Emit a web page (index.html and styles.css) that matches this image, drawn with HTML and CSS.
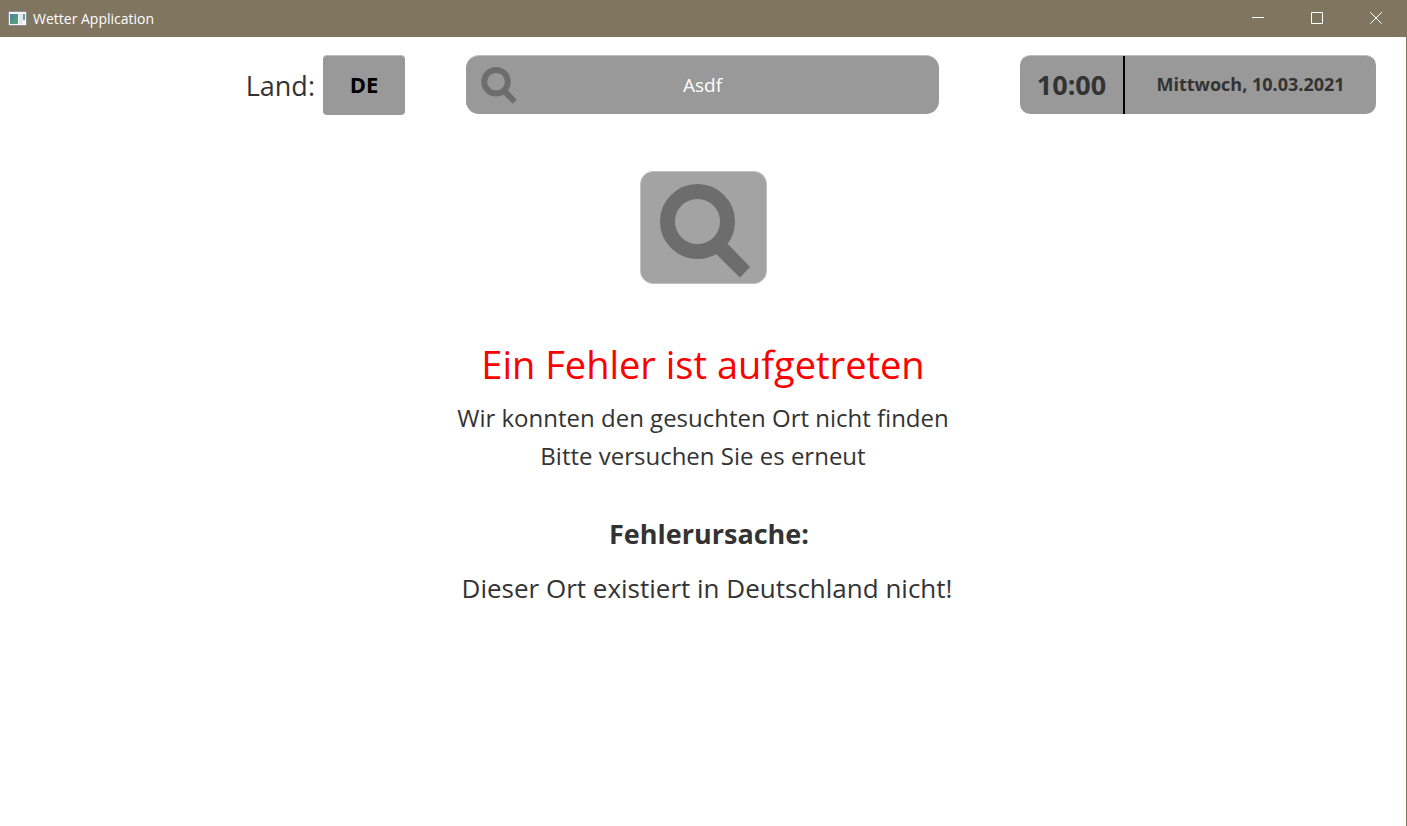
FILE: index.html
```html
<!DOCTYPE html>
<html lang="de">
<head>
<meta charset="utf-8">
<meta name="viewport" content="width=device-width, initial-scale=1">
<title>Wetter Application</title>
<link rel="stylesheet" href="styles.css">
</head>
<body>
<div class="window">
  <header class="titlebar">
    <svg class="app-icon" viewBox="0 0 19 16" aria-hidden="true">
      <defs>
        <linearGradient id="screen" x1="0" y1="0" x2="1" y2="1">
          <stop offset="0" stop-color="#4a7fa0"/>
          <stop offset="1" stop-color="#58a874"/>
        </linearGradient>
      </defs>
      <rect x="0" y="0" width="19" height="15" rx="1" fill="#8d8d8f"/>
      <rect x="1" y="1" width="17" height="13" fill="#f4f6f8"/>
      <rect x="2" y="3" width="8" height="10" fill="url(#screen)"/>
      <rect x="11" y="3" width="4" height="10" fill="#e4e8ec"/>
      <rect x="15" y="3" width="2" height="6" fill="#62a596"/>
    </svg>
    <span class="app-name">Wetter Application</span>
    <button class="window-button" type="button" aria-label="Minimieren">
      <svg viewBox="0 0 12 12" width="12" height="12"><path d="M0 5.5H12"/></svg>
    </button>
    <button class="window-button" type="button" aria-label="Maximieren">
      <svg viewBox="0 0 12 12" width="12" height="12"><path d="M.5 .5H11.5V11.5H.5Z"/></svg>
    </button>
    <button class="window-button" type="button" aria-label="Schließen">
      <svg viewBox="0 0 12 12" width="12" height="12"><path d="M.3 .3L11.7 11.7M11.7 .3L.3 11.7"/></svg>
    </button>
  </header>

  <main class="content">
    <div class="toolbar">
      <div class="country">
        <label class="country-label" for="country">Land:</label>
        <button class="country-button" id="country" type="button">DE</button>
      </div>
      <form class="search">
        <label class="search-label" for="place" aria-label="Ort suchen">
          <svg class="search-icon" viewBox="0 0 90 94" aria-hidden="true">
            <circle cx="37.5" cy="37.5" r="30"/>
            <path d="M64 56L90 83L80 93.5L53 67Z"/>
          </svg>
        </label>
        <input class="search-input" id="place" type="text" value="Asdf">
      </form>
      <div class="clock">
        <time class="clock-time">10:00</time>
        <time class="clock-date" datetime="2021-03-10">Mittwoch, 10.03.2021</time>
      </div>
    </div>

    <div class="badge">
      <svg class="badge-icon" viewBox="0 0 90 94" aria-hidden="true">
        <circle cx="37.5" cy="37.5" r="30"/>
        <path d="M64 56L90 83L80 93.5L53 67Z"/>
      </svg>
    </div>

    <section class="message">
      <h1 class="message-title">Ein Fehler ist aufgetreten</h1>
      <p class="message-text">Wir konnten den gesuchten Ort nicht finden</p>
      <p class="message-text">Bitte versuchen Sie es erneut</p>
    </section>

    <section class="cause">
      <h2 class="cause-title">Fehlerursache:</h2>
      <p class="cause-text">Dieser Ort existiert in Deutschland nicht!</p>
    </section>
  </main>
</div>
</body>
</html>
```

FILE: styles.css
```css
* {
  box-sizing: border-box;
}

body {
  margin: 0;
  background: #fff;
  color: #333;
  font-family: "Segoe UI", "Open Sans", "Noto Sans", sans-serif;
}

h1, h2, p {
  margin: 0;
  font-weight: 400;
}

button, input {
  border: 0;
  padding: 0;
  font-family: inherit;
}

.window {
  display: flex;
  flex-direction: column;
  min-height: 100vh;
}

.titlebar {
  display: flex;
  align-items: center;
  height: 37px;
  padding-left: 8px;
  padding-right: 2px;
  background: #80755f;
  color: #fff;
}

.app-icon {
  width: 19px;
  height: 16px;
}

.app-name {
  flex: 1;
  margin-left: 6px;
  font-size: 14px;
}

.window-button {
  display: grid;
  place-items: center;
  width: 59px;
  height: 37px;
  padding-bottom: 1px;
  background: none;
}

.window-button path {
  fill: none;
  stroke: #fff;
}

.content {
  display: flex;
  flex: 1;
  flex-direction: column;
  align-items: center;
  padding-top: 18px;
  border-right: 1px solid #80755f;
}

.toolbar {
  display: grid;
  grid-template-columns: 1fr minmax(0, 473px) 1fr;
  align-items: start;
  width: 100%;
  padding-right: 1px;
}

.country {
  display: flex;
  align-items: center;
  justify-self: end;
  gap: 8px;
  margin-right: 61px;
}

.country-label {
  font-size: 27px;
}

.country-button {
  width: 82px;
  height: 60px;
  padding-bottom: 3px;
  border-top: 1px solid #c0c0c0;
  border-radius: 4px;
  background: #999;
  color: #000;
  font-size: 22px;
  font-weight: 700;
}

.search {
  display: grid;
  grid-template-columns: 51px 1fr 51px;
  align-items: center;
  height: 59px;
  border-top: 1px solid #c0c0c0;
  border-radius: 13px;
  background: #999;
}

.search-label {
  display: flex;
  justify-content: end;
}

.search-icon {
  width: 36px;
  height: 37px;
}

.search-icon circle,
.badge-icon circle {
  fill: none;
  stroke: #6d6d6d;
  stroke-width: 15;
}

.search-icon path,
.badge-icon path {
  fill: #6d6d6d;
}

.search-input {
  width: 100%;
  background: none;
  color: #fff;
  font-size: 19px;
  text-align: center;
  outline: 0;
}

.clock {
  display: flex;
  justify-self: end;
  width: 356px;
  height: 59px;
  margin-right: 29px;
  border-top: 1px solid #c0c0c0;
  border-radius: 10px;
  background: #999;
  font-weight: 700;
}

.clock-time,
.clock-date {
  display: grid;
  place-items: center;
  padding-bottom: 2px;
}

.clock-time {
  width: 105px;
  border-right: 2px solid #000;
  font-size: 27px;
}

.clock-date {
  flex: 1;
  font-size: 18px;
}

.badge {
  display: grid;
  place-items: center;
  width: 127px;
  height: 113px;
  margin-top: 56px;
  padding-top: 6px;
  padding-left: 4px;
  border: 1px solid #c0c0c0;
  border-radius: 13px;
  background: #a3a3a3;
}

.badge-icon {
  width: 90px;
  height: 94px;
}

.message {
  margin-top: 51px;
  text-align: center;
}

.message-title {
  margin-bottom: 6px;
  color: #f00;
  font-size: 38px;
  line-height: 58px;
}

.message-text {
  font-size: 24px;
  line-height: 38px;
}

.cause {
  margin-top: 37px;
  padding-left: 8px;
  text-align: center;
}

.cause-title {
  padding-left: 4px;
  font-size: 27px;
  font-weight: 700;
  line-height: 44px;
}

.cause-text {
  margin-top: 10px;
  font-size: 26px;
  line-height: 44px;
}
```
